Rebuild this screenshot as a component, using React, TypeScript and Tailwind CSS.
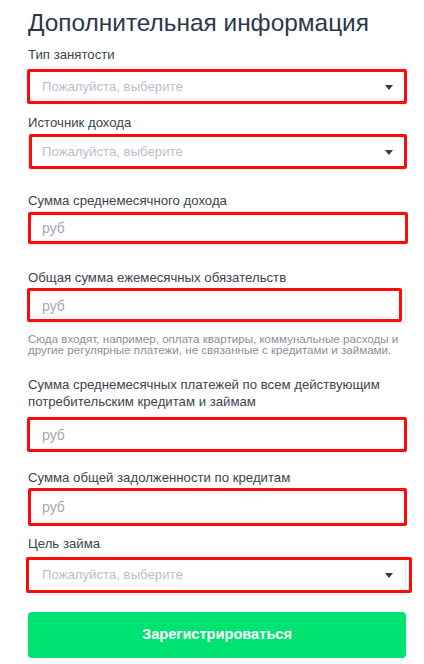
import React from 'react';

type Box = { top: string; bottom: string; left: string; right: string };

type Field = {
  label: string;
  kind: 'select' | 'money';
  labelMt: string;
  inputMt: string;
  box: Box;
  hint?: string;
};

const fields: Field[] = [
  {
    label: 'Тип занятости',
    kind: 'select',
    labelMt: 'mt-[7px]',
    inputMt: 'mt-[7px]',
    box: { top: '-top-[1px]', bottom: 'bottom-0', left: '-left-[1px]', right: '-right-[1px]' },
  },
  {
    label: 'Источник дохода',
    kind: 'select',
    labelMt: 'mt-[10px]',
    inputMt: 'mt-[4px]',
    box: { top: '-top-[1px]', bottom: 'bottom-0', left: 'left-[1px]', right: '-right-[1px]' },
  },
  {
    label: 'Сумма среднемесячного дохода',
    kind: 'money',
    labelMt: 'mt-[23px]',
    inputMt: 'mt-[2px]',
    box: { top: 'top-[1px]', bottom: 'bottom-[1px]', left: 'left-0', right: '-right-[2px]' },
  },
  {
    label: 'Общая сумма ежемесячных обязательств',
    kind: 'money',
    labelMt: 'mt-[24px]',
    inputMt: 'mt-[3px]',
    box: { top: '-top-[1px]', bottom: 'bottom-[1px]', left: '-left-[1px]', right: 'right-[4px]' },
    hint: 'Сюда входят, например, оплата квартиры, коммунальные расходы и другие регулярные платежи, не связанные с кредитами и займами.',
  },
  {
    label: 'Сумма среднемесячных платежей по всем действующим потребительским кредитам и займам',
    kind: 'money',
    labelMt: 'mt-[21px]',
    inputMt: 'mt-[8px]',
    box: { top: '-top-[1px]', bottom: 'bottom-0', left: '-left-[1px]', right: '-right-[1px]' },
  },
  {
    label: 'Сумма общей задолженности по кредитам',
    kind: 'money',
    labelMt: 'mt-[17px]',
    inputMt: 'mt-[4px]',
    box: { top: '-top-[2px]', bottom: '-bottom-[2px]', left: 'left-0', right: '-right-[1px]' },
  },
  {
    label: 'Цель займа',
    kind: 'select',
    labelMt: 'mt-[11px]',
    inputMt: 'mt-[6px]',
    box: { top: '-top-[1px]', bottom: '-bottom-[1px]', left: '-left-[2px]', right: '-right-[6px]' },
  },
];

const FormField: React.FC<{ field: Field }> = ({ field }) => {
  const { box } = field;
  return (
    <div>
      <div className={`${field.labelMt} text-[13.2px] leading-[17px] text-[#3a4450]`}>{field.label}</div>
      <div className={`${field.inputMt} relative`}>
        <div className="h-[34px] flex items-center justify-between bg-white border border-[#e4e6ea] rounded-[3px] pl-[13px] pr-[11px] shadow-[0_1px_2px_rgba(0,0,0,0.06)]">
          {field.kind === 'select' ? (
            <>
              <span className="text-[13.2px] text-[#b9c0cd]">Пожалуйста, выберите</span>
              <svg width="8" height="5" viewBox="0 0 8 5" className="mr-[1px]">
                <path d="M0 0 H8 L4 5 Z" fill="#2d3a50" />
              </svg>
            </>
          ) : (
            <span className="text-[14px] text-[#a3a8b0]">руб</span>
          )}
        </div>
        {/* red annotation frame */}
        <div
          className={`absolute ${box.top} ${box.bottom} ${box.left} ${box.right} border-[3px] border-[#ff0a0a] rounded-[2px] pointer-events-none`}
        />
      </div>
      {field.hint && (
        <div className="mt-[10px] text-[11.6px] leading-[11px] text-[#8a8f96] pr-[2px]">{field.hint}</div>
      )}
    </div>
  );
};

const App: React.FC = () => {
  return (
    <div className="w-[424px] h-[664px] bg-white overflow-hidden font-['Liberation_Sans',Arial,sans-serif]">
      <div className="pl-[28px] pr-[18px] pt-[7px]">
        <h1 className="text-[24.4px] leading-[32px] text-[#2b3848]">Дополнительная информация</h1>

        {fields.map((f) => (
          <FormField key={f.label} field={f} />
        ))}

        <button className="mt-[20px] w-full h-[46px] rounded-[4px] bg-[#00e272] text-white text-[14.6px] font-bold">
          Зарегистрироваться
        </button>
      </div>
    </div>
  );
};

export default App;
